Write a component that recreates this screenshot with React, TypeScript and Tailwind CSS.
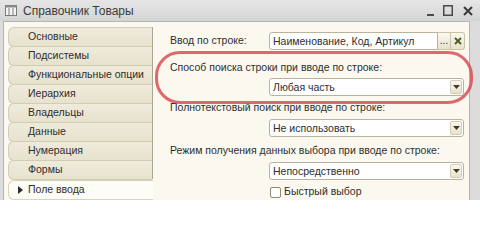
import React from "react";

const tabs = [
	"Основные",
	"Подсистемы",
	"Функциональные опции",
	"Иерархия",
	"Владельцы",
	"Данные",
	"Нумерация",
	"Формы",
];

const Select: React.FC<{ value: string }> = ({ value }) => (
	<div className="ml-[99px] flex h-[18px] w-[195px] items-stretch rounded-[3px] border border-[#b9b39c] bg-white">
		<span className="flex-1 pl-[3px] leading-[16px]">{value}</span>
		<span className="m-[1px] flex w-[12px] items-center justify-center rounded-[2px] border border-[#d3cdb4] bg-gradient-to-b from-[#faf8ef] to-[#e8e2cc]">
			<svg width="7" height="4" viewBox="0 0 7 4">
				<path d="M0 0h7L3.5 4z" fill="#3d3a2c" />
			</svg>
		</span>
	</div>
);

export default function App() {
	return (
		<div className="relative h-[200px] w-[480px] overflow-hidden whitespace-nowrap bg-[#dcdcdc] font-['Liberation_Sans',Arial,sans-serif] text-[10.5px] text-[#2e2e2e]">
			{/* title bar */}
			<div className="flex h-[21px] items-center bg-gradient-to-b from-[#e6e6e6] to-[#d4d4d4] pl-[5px] pr-[7px]">
				<svg width="12" height="11" viewBox="0 0 12 11" className="mr-[6px]">
					<rect x="0.5" y="0.5" width="11" height="10" fill="#f4f4f4" stroke="#7a7a7a" />
					<rect x="0.5" y="0.5" width="11" height="2" fill="#8a8a8a" />
					<path d="M4 3v8M8 3v8" stroke="#7a7a7a" />
				</svg>
				<span className="text-[12px] text-[#3b3b3b]">Справочник Товары</span>
				<div className="ml-auto flex items-center gap-[9px]">
					<svg width="7" height="10" viewBox="0 0 7 10">
						<path d="M0 9h7" stroke="#4a4a4a" strokeWidth="2" />
					</svg>
					<svg width="10" height="11" viewBox="0 0 10 11">
						<rect x="0.75" y="0.75" width="8.5" height="9.5" fill="none" stroke="#4a4a4a" strokeWidth="1.5" />
					</svg>
					<svg width="10" height="10" viewBox="0 0 10 10" className="ml-[1px]">
						<path d="M1 1l8 8M9 1l-8 8" stroke="#3a3a3a" strokeWidth="2" />
					</svg>
				</div>
			</div>

			{/* body */}
			<div className="ml-[3px] mr-[10px] flex h-[179px] border-l border-r border-t border-[#b4b4b4] bg-[#fbf9ef]">
				{/* tabs */}
				<div className="ml-[4px] mt-[5px] flex w-[145px] flex-col">
					<div className="flex flex-col border-r border-[#aaa593]">
						{tabs.map((t) => (
							<div
								key={t}
								className="-mb-px flex h-[20px] items-center rounded-l-[6px] border border-r-0 border-[#d2ccb2] bg-gradient-to-b from-[#efebdc] to-[#e7e2cd] pl-[19px]"
							>
								{t}
							</div>
						))}
					</div>
					<div className="mt-[1px] flex h-[20px] items-center rounded-l-[6px] border border-r-0 border-[#d8d3bc] bg-[#fdfcf6] pl-[9px]">
						<svg width="5" height="8" viewBox="0 0 5 8" className="mr-[5px]">
							<path d="M0 0l5 4-5 4z" fill="#2a2a2a" />
						</svg>
						Поле ввода
					</div>
				</div>

				{/* form */}
				<div className="flex flex-1 flex-col pl-[17px] pt-[10px]">
					<div className="flex h-[18px] items-center">
						<span className="w-[99px]">Ввод по строке:</span>
						<div className="flex h-[18px] w-[196px] items-stretch">
							<span className="flex-1 rounded-l-[3px] border border-[#b9b39c] bg-white pl-[3px] leading-[16px]">
								Наименование, Код, Артикул
							</span>
							<span className="flex w-[13px] items-end justify-center border-y border-r border-[#c9c3aa] bg-gradient-to-b from-[#faf8ef] to-[#e8e2cc] pb-[3px] text-[10px] leading-none">
								...
							</span>
							<span className="flex w-[14px] items-center justify-center rounded-r-[3px] border-y border-r border-[#c9c3aa] bg-gradient-to-b from-[#faf8ef] to-[#e8e2cc]">
								<svg width="8" height="8" viewBox="0 0 8 8">
									<path d="M1 1l6 6M7 1l-6 6" stroke="#4d5a22" strokeWidth="1.8" />
								</svg>
							</span>
						</div>
					</div>

					<div className="mt-[10px] h-[14px] leading-[14px]">Способ поиска строки при вводе по строке:</div>
					<div className="mt-[4px]">
						<Select value="Любая часть" />
					</div>

					<div className="mt-[4px] h-[14px] leading-[14px]">Полнотекстовый поиск при вводе по строке:</div>
					<div className="mt-[5px]">
						<Select value="Не использовать" />
					</div>

					<div className="mt-[6px] h-[14px] leading-[14px]">
						Режим получения данных выбора при вводе по строке:
					</div>
					<div className="mt-[5px]">
						<Select value="Непосредственно" />
					</div>

					<div className="ml-[100px] mt-[5px] flex h-[14px] items-center">
						<span className="mr-[3px] h-[11px] w-[11px] rounded-[2px] border border-[#8f8a76] bg-white" />
						Быстрый выбор
					</div>
				</div>
			</div>

			{/* red highlight */}
			<div className="pointer-events-none absolute left-[155px] top-[51px] h-[53px] w-[318px] rounded-[25px] border-[3.5px] border-[#d8434d]/80" />
		</div>
	);
}
